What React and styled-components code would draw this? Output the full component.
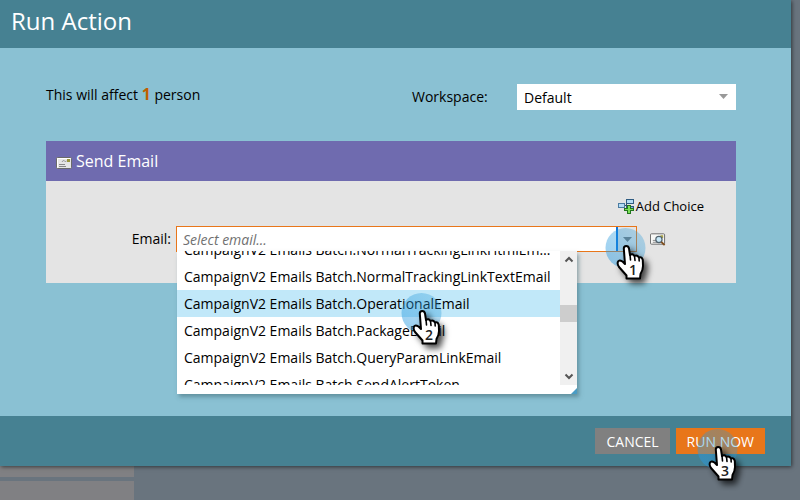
import React from "react";
import styled, { createGlobalStyle } from "styled-components";

const GlobalStyle = createGlobalStyle`
  *, *::before, *::after { box-sizing: border-box; }
  body {
    margin: 0;
    background: #69747e;
    color: #000;
    font: 14px/20px "Open Sans", "Noto Sans", sans-serif;
  }
  button, input, select { font: inherit; color: inherit; }
`;

const Page = styled.div`
  display: flex;
  flex-direction: column;
  min-height: 100vh;
  overflow: hidden;
`;

const Dialog = styled.main`
  position: relative;
  z-index: 1;
  margin-right: 9px;
  background: #8ac1d3;
  box-shadow: 1px 1px 4px rgba(0, 0, 0, 0.55);
`;

const TitleBar = styled.header`
  height: 48px;
  padding: 5px 11px;
  background: #468192;
`;

const Title = styled.h1`
  margin: 0;
  color: #fff;
  font-size: 24px;
  font-weight: 400;
  line-height: 32px;
`;

const Content = styled.div`
  padding: 36px 55px 133px 46px;
`;

const SummaryRow = styled.div`
  display: flex;
  align-items: center;
  height: 26px;
  margin-bottom: 31px;
`;

const Summary = styled.p`
  flex: 1;
  margin: 0 0 5px;
`;

const Count = styled.strong`
  color: #c05f00;
  font-size: 16px;
`;

const WorkspaceLabel = styled.label`
  width: 105px;
`;

const SelectWrap = styled.div`
  display: grid;
  grid-template-columns: 1fr 20px;
  align-items: center;
  width: 219px;
  height: 26px;
  background: #fff;
`;

const Select = styled.select`
  grid-area: 1 / 1 / 2 / 3;
  width: 100%;
  height: 26px;
  padding: 2px 7px 0;
  border: 0;
  border-radius: 0;
  outline: 0;
  appearance: none;
  background: transparent;
`;

const SelectArrow = styled.svg`
  grid-area: 1 / 2;
  width: 9px;
  height: 5px;
  margin: 0 0 2px 3px;
  pointer-events: none;
`;

const Panel = styled.section`
  background: #e4e4e4;
`;

const PanelHeader = styled.header`
  display: flex;
  align-items: center;
  gap: 4px;
  height: 40px;
  padding: 0 10px;
  background: #6f6baf;
`;

const PanelTitle = styled.h2`
  margin: 0;
  color: #fff;
  font-size: 16px;
  font-weight: 400;
  line-height: 24px;
`;

const PanelBody = styled.div`
  padding: 15px 32px 31px;
`;

const Toolbar = styled.div`
  display: flex;
  justify-content: flex-end;
  margin-bottom: 10px;
`;

const AddChoice = styled.button`
  display: flex;
  align-items: center;
  gap: 1px;
  padding: 0;
  border: 0;
  background: none;
  font-size: 13px;
  line-height: 20px;
`;

const FieldRow = styled.div`
  display: grid;
  grid-template-columns: 93px 1fr 16px;
  align-items: center;
  margin-right: 38px;
`;

const FieldLabel = styled.label`
  text-align: right;
`;

const ComboBox = styled.div`
  position: relative;
  display: flex;
  height: 26px;
  margin: 0 13px 0 5px;
  border: 1px solid #e8761a;
`;

const ComboInput = styled.input`
  flex: 1;
  min-width: 0;
  padding: 2px 6px 0;
  border: 0;
  outline: 0;
  background: #fff;
  &::placeholder { color: #707070; font-style: italic; opacity: 1; }
`;

const ComboTrigger = styled.button`
  width: 20px;
  padding: 0;
  border: 0;
  border-left: 2px solid #0872dc;
  background: #e4e4e4;
  display: flex;
  align-items: center;
  justify-content: center;
`;

const Preview = styled.button`
  display: flex;
  padding: 0;
  border: 0;
  background: none;
`;

const Menu = styled.div`
  position: absolute;
  top: 24px;
  left: 0;
  z-index: 2;
  width: 400px;
  padding-bottom: 9px;
  background: #fff;
  box-shadow: 2px 3px 4px rgba(60, 100, 110, 0.5);
`;

const MenuView = styled.div`
  display: grid;
  grid-template-columns: 1fr 17px;
  height: 134px;
`;

const Options = styled.ul`
  height: 134px;
  margin: 0;
  padding: 0;
  overflow: hidden;
  list-style: none;
`;

const Option = styled.li`
  height: 27px;
  padding: 0 7px;
  overflow: hidden;
  line-height: 27px;
  text-overflow: ellipsis;
  white-space: nowrap;
  background: ${(p) => (p.$active ? "#c1e8f9" : "#fff")};
  &:first-child { margin-top: -15px; }
`;

const ScrollTrack = styled.div`
  display: grid;
  grid-template-rows: 17px 37px 17px 1fr 17px;
  justify-items: center;
  align-items: center;
  background: #f0f0f0;
`;

const ScrollThumb = styled.div`
  grid-row: 3;
  width: 17px;
  height: 17px;
  background: #cdcdcd;
`;

const ScrollDown = styled.svg`
  grid-row: 5;
`;

const ResizeCorner = styled.svg`
  position: absolute;
  right: 0;
  bottom: 0;
`;

const Footer = styled.footer`
  display: flex;
  justify-content: flex-end;
  gap: 6px;
  padding: 12px 26px;
  background: #468192;
`;

const Action = styled.button`
  position: relative;
  height: 26px;
  padding: 1px 11px 0;
  border: 0;
  color: #fff;
  line-height: 25px;
  background: ${(p) => (p.$primary ? "#e8761a" : "#808080")};
`;

const Backdrop = styled.div`
  display: flex;
  flex: 1;
`;

const SideList = styled.div`
  display: grid;
  grid-template-rows: 11px 1fr;
  gap: 4px;
  width: 134px;
`;

const SideItem = styled.div`
  background: #808083;
`;

const MarkerSvg = styled.svg`
  position: absolute;
  top: ${(p) => p.$top}px;
  left: ${(p) => p.$left}px;
  z-index: 3;
  pointer-events: none;
`;

function Marker({ step, top, left }) {
  const shadow = `hand-shadow-${step}`;
  const halo = `halo-${step}`;
  return (
    <MarkerSvg $top={top} $left={left} width="56" height="66" viewBox="0 0 56 66" aria-hidden="true">
      <defs>
        <filter id={shadow} x="-30%" y="-20%" width="180%" height="170%">
          <feDropShadow dx="4" dy="4" stdDeviation="3" floodColor="#000" floodOpacity="0.7" />
        </filter>
        <linearGradient id={halo} x1="0" y1="1" x2="1" y2="0">
          <stop offset="0" stopColor="#289ae3" stopOpacity="0.5" />
          <stop offset="1" stopColor="#289ad6" stopOpacity="0.28" />
        </linearGradient>
      </defs>
      <circle cx="20.5" cy="20" r="20" fill={`url(#${halo})`} />
      <g filter={`url(#${shadow})`}>
        <path
          d="M18.8 20.5 Q18.8 18 21.2 18 Q23.6 18 24 20.5 L25 27 Q27.5 25 29.5 28 Q32 26.5 34 29.5 Q37 28.5 37.8 32 L38 38 Q38 42 35.5 46 L35 50.5 H21.5 V47.5 L14 39 Q11.5 35 13.5 33 Q16 31.5 20 36 Z"
          fill="#fff"
          stroke="#000"
          strokeWidth="2"
          strokeLinejoin="round"
        />
        <path d="M25 26.5 L25.5 32 M29.5 28 L30 32.5 M34 29.5 L34.2 33" fill="none" stroke="#000" strokeWidth="1.6" strokeLinecap="round" />
      </g>
      <text x="28" y="47" textAnchor="middle" fontFamily="Open Sans, sans-serif" fontSize="14" fontWeight="600" fill="#222">{step}</text>
    </MarkerSvg>
  );
}

function EnvelopeIcon() {
  return (
    <svg width="16" height="16" viewBox="0 0 16 16" aria-hidden="true">
      <rect x="0.5" y="4.5" width="15" height="11" rx="1" fill="#e6e6e6" stroke="#6b6b6b" />
      <path d="M1.5 14.5V5.5H14.5" fill="none" stroke="#fff" />
      <path d="M3 11.5H9M3 13.5H10" stroke="#888" />
      <path d="M6 9Q7 6.5 8.5 8T11 7.5" fill="none" stroke="#999" />
      <rect x="11" y="6" width="3" height="3" fill="#9a963b" />
    </svg>
  );
}

function AddChoiceIcon() {
  return (
    <svg width="17" height="16" viewBox="0 0 17 16" aria-hidden="true">
      <path d="M6 7.5H9M8.5 4V11" fill="none" stroke="#31516a" />
      <rect x="0.5" y="5.5" width="6" height="4" fill="#b4dcf6" stroke="#4a7ba1" />
      <rect x="8.5" y="1.5" width="7" height="4" fill="#b4dcf6" stroke="#2f5c82" />
      <rect x="8.5" y="8.5" width="7" height="4" fill="#7db4dc" stroke="#2f5c82" />
      <path d="M9 7H13V10H16V13H13V16H9V13H6V10H9Z" fill="#23761e" />
      <path d="M10 8H12V11H15V12H12V15H10V12H7V11H10Z" fill="#7be158" />
    </svg>
  );
}

function PreviewIcon() {
  return (
    <svg width="17" height="16" viewBox="0 0 17 16" aria-hidden="true">
      <rect x="0.5" y="2.5" width="15" height="11" rx="1" fill="#f7f7f5" stroke="#666" />
      <path d="M3 9.5H8M3 11.5H8" stroke="#888" />
      <rect x="11" y="4" width="3" height="3" fill="#aaa348" />
      <circle cx="9.5" cy="8.5" r="3.3" fill="#c8e8f7" stroke="#52636e" strokeWidth="1.3" />
      <path d="M12 11L15.5 14.5" stroke="#80501f" strokeWidth="2" />
    </svg>
  );
}

const emails = [
  "CampaignV2 Emails Batch.NormalTrackingLinkHtmlEmail",
  "CampaignV2 Emails Batch.NormalTrackingLinkTextEmail",
  "CampaignV2 Emails Batch.OperationalEmail",
  "CampaignV2 Emails Batch.PackageEmail",
  "CampaignV2 Emails Batch.QueryParamLinkEmail",
  "CampaignV2 Emails Batch.SendAlertToken",
];

export default function App() {
  return (
    <>
      <GlobalStyle />
      <Page>
        <Dialog>
          <TitleBar>
            <Title>Run Action</Title>
          </TitleBar>
          <Content>
            <SummaryRow>
              <Summary>
                This will affect <Count>1</Count> person
              </Summary>
              <WorkspaceLabel htmlFor="workspace">Workspace:</WorkspaceLabel>
              <SelectWrap>
                <Select id="workspace" defaultValue="Default">
                  <option>Default</option>
                </Select>
                <SelectArrow viewBox="0 0 9 5" aria-hidden="true">
                  <path d="M0 0H9L4.5 5Z" fill="#999" />
                </SelectArrow>
              </SelectWrap>
            </SummaryRow>
            <Panel>
              <PanelHeader>
                <EnvelopeIcon />
                <PanelTitle>Send Email</PanelTitle>
              </PanelHeader>
              <PanelBody>
                <Toolbar>
                  <AddChoice type="button">
                    <AddChoiceIcon />
                    Add Choice
                  </AddChoice>
                </Toolbar>
                <FieldRow>
                  <FieldLabel htmlFor="email">Email:</FieldLabel>
                  <ComboBox>
                    <ComboInput id="email" type="text" placeholder="Select email..." role="combobox" aria-expanded="true" aria-controls="email-options" />
                    <ComboTrigger type="button" aria-label="Show emails">
                      <svg width="9" height="5" viewBox="0 0 9 5" aria-hidden="true">
                        <path d="M0 0H9L4.5 5Z" fill="#777" />
                      </svg>
                    </ComboTrigger>
                    <Menu>
                      <MenuView>
                        <Options id="email-options" role="listbox">
                          {emails.map((name, i) => (
                            <Option key={name} role="option" aria-selected={i === 2} $active={i === 2}>
                              {name}
                            </Option>
                          ))}
                        </Options>
                        <ScrollTrack aria-hidden="true">
                          <svg width="10" height="7" viewBox="0 0 9 7">
                            <path d="M1 5.5L4.5 2L8 5.5" fill="none" stroke="#555" strokeWidth="2" />
                          </svg>
                          <ScrollThumb />
                          <ScrollDown width="10" height="7" viewBox="0 0 9 7">
                            <path d="M1 1.5L4.5 5L8 1.5" fill="none" stroke="#555" strokeWidth="2" />
                          </ScrollDown>
                        </ScrollTrack>
                      </MenuView>
                      <ResizeCorner width="6" height="6" viewBox="0 0 6 6" aria-hidden="true">
                        <path d="M6 0V6H0Z" fill="#4a9cc4" />
                      </ResizeCorner>
                      <Marker step={2} top={42} left={224} />
                    </Menu>
                    <Marker step={1} top={1} left={428} />
                  </ComboBox>
                  <Preview type="button" aria-label="Preview email">
                    <PreviewIcon />
                  </Preview>
                </FieldRow>
              </PanelBody>
            </Panel>
          </Content>
          <Footer>
            <Action type="button">CANCEL</Action>
            <Action type="button" $primary>
              RUN NOW
              <Marker step={3} top={1} left={21} />
            </Action>
          </Footer>
        </Dialog>
        <Backdrop>
          <SideList>
            <SideItem />
            <SideItem />
          </SideList>
        </Backdrop>
      </Page>
    </>
  );
}
